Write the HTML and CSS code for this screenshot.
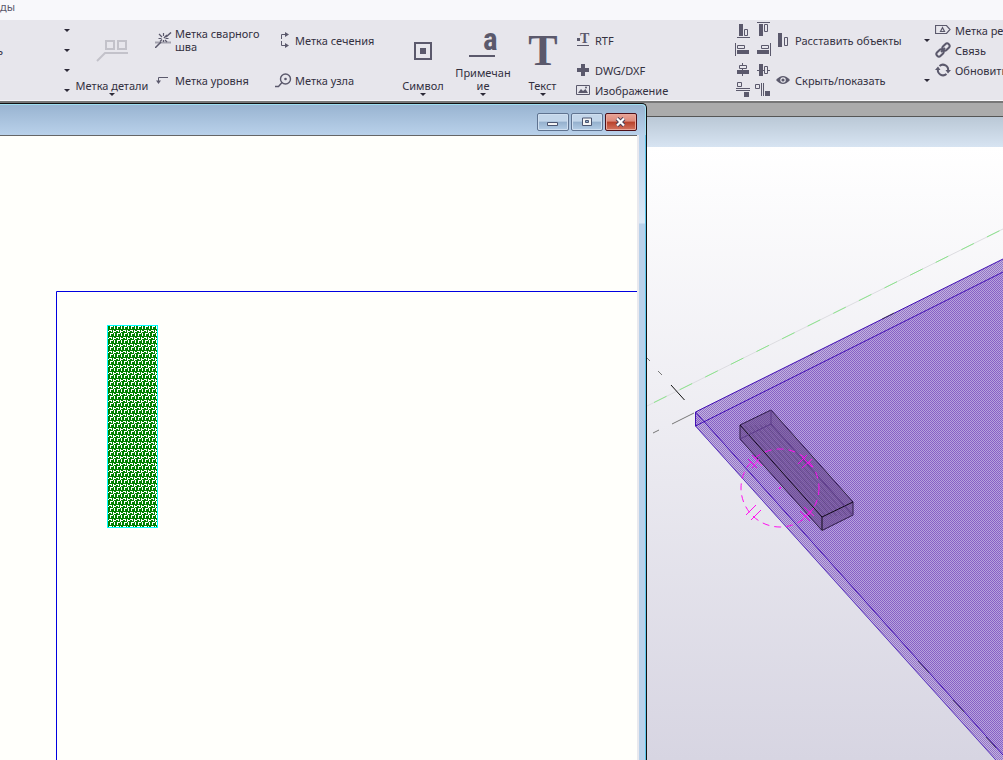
FILE: index.html
```html
<!DOCTYPE html>
<html lang="ru">
<head>
<meta charset="utf-8">
<title>Чертёж</title>
<link rel="stylesheet" href="styles.css">
</head>
<body>
<nav class="tabs"><a class="tab" href="#views">ды</a></nav>

<header class="ribbon">
  <div class="group group-edge">
    <button class="tool tool-menu" aria-label="Меню 1"><span></span><i class="caret"></i></button>
    <button class="tool tool-menu"><span>ь</span><i class="caret"></i></button>
    <button class="tool tool-menu" aria-label="Меню 3"><span></span><i class="caret"></i></button>
    <button class="tool tool-menu" aria-label="Меню 4"><span></span><i class="caret"></i></button>
  </div>

  <button class="big big-part">
    <span class="big-icon"><svg width="32" height="22" viewBox="0 0 32 22" fill="none" stroke="#c3c2ca" stroke-width="2"><path d="M10 1h8v8h-8zM22 1h8v8h-8zM1 21l8-8h23"/></svg></span>
    <span>Метка детали</span><i class="caret"></i>
  </button>

  <div class="group group-marks">
    <button class="tool tall">
      <svg class="icon" viewBox="0 0 18 16"><path d="M0 10.500h16" stroke="#a3a2ae" stroke-width="2"/><path d="M0 16l6-6M11 5l5-4.500M9 6l3-3" stroke="#5b596c" stroke-width="1.500"/><path d="M8.500 1v3M4 2l3 3M3.500 6.500h3M10.500 6.500h3M10 8l2 2M5 9.500l2-2M8.500 8v2" stroke="#5b596c" stroke-width="1.200"/></svg>
      <span>Метка сварного<br>шва</span>
    </button>
    <button class="tool tall">
      <svg class="icon" viewBox="0 0 18 16"><path d="M13 5.500H3.500V10" fill="none" stroke="#5b596c"/><path d="M1 8.500h5L3.500 12z" fill="#5b596c"/></svg>
      <span>Метка уровня</span>
    </button>
  </div>

  <div class="group group-sections">
    <button class="tool tall">
      <svg class="icon" viewBox="0 0 18 16"><path d="M6.500 7V2.500H10M6.500 9v4.500H10" fill="none" stroke="#5b596c"/><path d="M10 0l4 2.500L10 5zM10 11l4 2.500-4 2.500z" fill="#5b596c"/></svg>
      <span>Метка сечения</span>
    </button>
    <button class="tool tall">
      <svg class="icon" viewBox="0 0 18 16"><g fill="none" stroke="#5b596c" stroke-width="1.400"><circle cx="10.500" cy="7" r="5"/><path d="M7 10.500L3.500 14.500H0"/></g><circle cx="10.500" cy="7" r="1.300" fill="#5b596c"/></svg>
      <span>Метка узла</span>
    </button>
  </div>

  <button class="big big-symbol">
    <span class="big-icon"><svg width="18" height="18" viewBox="0 0 18 18"><path d="M1 1h16v16H1z" fill="none" stroke="#5b596c" stroke-width="2"/><path d="M6 6h6v6H6z" fill="#5b596c"/></svg></span>
    <span>Символ</span><i class="caret"></i>
  </button>
  <button class="big big-note">
    <span class="big-icon"><svg width="40" height="24" viewBox="0 0 40 24" fill="#5b596c"><text class="glyph-a" x="20" y="17">a</text><path d="M6 22h26v2H6z"/></svg></span>
    <span>Примечан<br>ие</span><i class="caret"></i>
  </button>
  <button class="big big-text">
    <span class="big-icon"><svg width="30" height="32" viewBox="0 0 30 32" fill="#5b596c"><text class="glyph-t" x="15" y="30" text-anchor="middle">T</text></svg></span>
    <span>Текст</span><i class="caret"></i>
  </button>

  <div class="group group-insert">
    <button class="tool tall">
      <svg class="icon" viewBox="0 0 18 16" fill="#5b596c"><text class="glyph-rtf" x="5" y="11">T</text><path d="M2 6h3v3H2zM2 13h12v1H2z"/></svg>
      <span>RTF</span>
    </button>
    <button class="tool">
      <svg class="icon" viewBox="0 0 18 16"><path d="M6 2h4v4h4v4h-4v4H6v-4H2V6h4z" fill="#5b596c"/></svg>
      <span>DWG/DXF</span>
    </button>
    <button class="tool">
      <svg class="icon" viewBox="0 0 18 16"><path d="M1.500 3.500h13v9h-13z" fill="none" stroke="#5b596c"/><path d="M3 11l3-4 2 2 2.500-2L13 11z" fill="#5b596c"/><circle cx="11" cy="5.500" r="1" fill="#5b596c"/></svg>
      <span>Изображение</span>
    </button>
  </div>

  <div class="align">
    <button aria-label="По нижнему краю"><svg viewBox="0 0 20 20"><path class="f" d="M6 4h4v12H6z"/><path class="s" d="M11.500 9.500h3v6h-3zM4 17.500h13"/></svg></button>
    <button aria-label="По верхнему краю"><svg viewBox="0 0 20 20"><path class="f" d="M6 4h4v12H6z"/><path class="s" d="M11.500 4.500h3v7h-3zM4 2.500h13"/></svg></button>
    <button aria-label="По левому краю"><svg viewBox="0 0 20 20"><path class="f" d="M4 10h12v4H4z"/><path class="s" d="M4.500 5.500h7v3h-7zM2.500 3v13"/></svg></button>
    <button aria-label="По правому краю"><svg viewBox="0 0 20 20"><path class="f" d="M4 10h12v4H4z"/><path class="s" d="M8.500 5.500h7v3h-7zM17.500 3v13"/></svg></button>
    <button aria-label="По центру"><svg viewBox="0 0 20 20"><path class="f" d="M4 10h12v4H4z"/><path class="s" d="M6.500 5.500h7v3h-7zM9.500 3v2M9.500 8v8"/></svg></button>
    <button aria-label="По середине"><svg viewBox="0 0 20 20"><path class="f" d="M6 4h4v12H6z"/><path class="s" d="M11.500 6.500h3v7h-3zM4 10.500h2M10 10.500h1M15 10.500h2"/></svg></button>
    <button aria-label="Интервал по вертикали"><svg viewBox="0 0 20 20"><path class="f" d="M11 12h5v5h-5z"/><path class="s" d="M4.500 2.500h4v4h-4zM3 8.500h14M3 10.500h14"/></svg></button>
    <button aria-label="Интервал по горизонтали"><svg viewBox="0 0 20 20"><path class="f" d="M12 11h5v5h-5z"/><path class="s" d="M2.500 4.500h4v4h-4zM8.500 3v13M10.500 3v13"/></svg></button>
  </div>

  <div class="group group-arrange">
    <button class="tool tool-menu tall">
      <svg class="icon" viewBox="0 0 18 16"><path d="M3 1h4v14H3z" fill="#5b596c"/><path d="M9.500 5.500h3v8h-3z" fill="none" stroke="#5b596c"/></svg>
      <span>Расставить объекты</span><i class="caret"></i>
    </button>
    <button class="tool tool-menu tall">
      <svg class="icon" viewBox="0 0 18 16"><path d="M1 8q7-8 14 0q-7 8-14 0z" fill="#5b596c"/><circle cx="8" cy="8" r="2.200" fill="none" stroke="#e7e6ec" stroke-width="1.200"/></svg>
      <span>Скрыть/показать</span><i class="caret"></i>
    </button>
  </div>

  <div class="group group-update">
    <button class="tool">
      <svg class="icon" viewBox="0 0 18 16"><path d="M.5 3.500h11l3.500 4-3.500 4H.5zM5.500 9.500l2-4 2 4z" fill="none" stroke="#5b596c" stroke-width="1.200"/></svg>
      <span>Метка ревизии</span>
    </button>
    <button class="tool">
      <svg class="icon" viewBox="0 0 18 16"><g fill="none" stroke="#5b596c" stroke-width="2"><rect x="7" y="2.500" width="8" height="5" rx="2.500" transform="rotate(-45 11 5)"/><rect x="1" y="8.500" width="8" height="5" rx="2.500" transform="rotate(-45 5 11)"/><path d="M6 10l4-4"/></g></svg>
      <span>Связь</span>
    </button>
    <button class="tool">
      <svg class="icon" viewBox="0 0 18 16"><g fill="none" stroke="#5b596c" stroke-width="2"><path d="M4.500 4A5.200 5.200 0 0 1 13 9"/><path d="M11.500 12A5.200 5.200 0 0 1 3 7"/></g><path d="M10.500 8h5.500l-3 3.500zM0 8h5.500L3 4.500z" fill="#5b596c"/></svg>
      <span>Обновить</span>
    </button>
  </div>
</header>

<main class="desk">
  <section class="win">
    <div class="titlebar">
      <button class="wbtn" aria-label="Свернуть"><svg width="14" height="10" viewBox="0 0 14 10"><path d="M1.500 5.500h10v3h-10z" fill="#f4f4f4" stroke="#4a5570"/></svg></button>
      <button class="wbtn" aria-label="Развернуть"><svg width="14" height="10" viewBox="0 0 14 10"><path d="M2.500 1h9v7.500h-9z" fill="#f4f4f4" stroke="#4a5570"/><path d="M5.500 3.500h3v2h-3z" fill="#8fabc8" stroke="#4a5570"/></svg></button>
      <button class="wbtn wbtn-close" aria-label="Закрыть"><svg width="14" height="10" viewBox="0 0 14 10"><path d="M3 1.500l7 7M10 1.500l-7 7" stroke="#4a4058" stroke-width="4"/><path d="M3 1.500l7 7M10 1.500l-7 7" stroke="#fff" stroke-width="2.200"/></svg></button>
    </div>
    <div class="frame">
      <svg class="sheet" aria-label="Чертёж">
        <defs>
          <pattern id="weave" width="7" height="7" patternUnits="userSpaceOnUse" x="109" y="190">
            <path d="M0 0h7v7H0z" fill="#008000"/>
            <path d="M1 0h3v1H1zM1 1h1v2H1zM5 0h1v3H5zM0 4h3v1H0zM2 5h1v1H2zM4 4h1v3H4zM5 5h2v1H5z" fill="#fff"/>
          </pattern>
        </defs>
        <path d="M56.500 3000V155.500H3000" fill="none" stroke="#0000e0"/>
        <rect x="108" y="190" width="49" height="201" fill="url(#weave)"/>
        <rect x="107.500" y="189.500" width="50" height="202" fill="none" stroke="#00ffff"/>
      </svg>
      <div class="rail"></div>
    </div>
  </section>

  <section class="model">
    <div class="model-title"></div>
    <svg class="scene" viewBox="647 147 356 613" preserveAspectRatio="xMinYMin slice" aria-label="3D вид">
      <defs>
        <pattern id="dots" width="2" height="2" patternUnits="userSpaceOnUse"><path d="M0 0h2v2H0z" fill="#b7a3dc"/><path d="M0 0h1v1H0zM1 1h1v1H1z" fill="#8760c6"/></pattern>
        <pattern id="edge" width="2" height="2" patternUnits="userSpaceOnUse"><path d="M0 0h2v2H0z" fill="#c1b2e0"/><path d="M0 0h1v1H0zM1 1h1v1H1z" fill="#9474c6"/></pattern>
        <pattern id="grain" width="4" height="4" patternUnits="userSpaceOnUse" patternTransform="rotate(-42)"><path d="M0 0h1v4H0z" fill="#432b65" fill-opacity=".3"/></pattern>
      </defs>
      <path d="M647 406L1003 229" stroke="#dcdce0"/>
      <path d="M654 402.500L1003 229" stroke="#8be58b" stroke-dasharray="14 14.600"/>
      <path d="M695 412L1003 259V768L695 426z" fill="url(#edge)"/>
      <path d="M695 426L1003 272V755L695 412z" fill="url(#dots)"/>
      <g fill="none" stroke="#4210b4">
        <path d="M695.500 426V412L1003 259"/><path d="M695.500 426L1003 272"/>
        <path d="M695.500 426L1003 768" stroke="#5a35bd"/><path d="M695.500 412L1003 755"/>
      </g>
      <path d="M810 355l4-2M882 319l12-6M918 661l11 12M953 700l11 12M986 737l10 11" stroke="#333" stroke-opacity=".7"/>
      <path d="M740 425L771 410L853 502V515L822 530.500L740 439z" fill="#5e4080" fill-opacity=".55"/>
      <path d="M771 424L853 515L822 517L740 426z" fill="url(#grain)"/>
      <g fill="none" stroke="#2c1a45">
        <path d="M740 425L771 410L853 502V515L822 530.500L740 439z"/>
        <path d="M740 425L822 517V530M822 517L853 502" stroke="#100818"/>
        <path d="M771 410V424L740 439M771 424L853 515" stroke="#5b3a88"/>
      </g>
      <g fill="none" stroke="#ff10f0">
        <circle cx="780" cy="488" r="39" stroke-dasharray="7 5"/>
        <path d="M748 459l9 9M752 455l10 11M798 464l9-9M802 468l10-9M746 515l10-10M751 520l10-10M804 507l10 9M800 511l10 10M752 468l7-9M802 457l10 10M803 518l11-10"/>
        <path d="M779 488h2" stroke-width="2"/>
      </g>
      <path d="M671 385l13.500 15" stroke="#111"/>
      <path d="M647 358l3 3M658 371l4 4M672 424l22-11M653 433l6-3" stroke="#777"/>
    </svg>
  </section>
</main>
</body>
</html>
```
FILE: styles.css
```css
* { box-sizing: border-box; }
body {
  margin: 0;
  height: 100vh;
  display: flex;
  flex-direction: column;
  overflow: hidden;
  font: 11px/13px "Noto Sans", "Open Sans", sans-serif;
  color: #33303f;
}
button {
  margin: 0;
  padding: 0;
  border: 0;
  background: none;
  color: inherit;
  font: inherit;
}
svg { display: block; flex: none; }

.tabs { height: 20px; flex: none; background: #f8f8fb; }
.tab { color: #5b596c; text-decoration: none; }

.ribbon {
  display: flex;
  flex: none;
  height: 81px;
  background: #e7e6ec;
  border-bottom: 1px solid #f8f8fb;
  overflow: hidden;
  white-space: nowrap;
}
.group {
  display: grid;
  grid-template-rows: repeat(4, 20px);
  flex: none;
}
.tool {
  display: flex;
  align-items: center;
  gap: 2px;
  text-align: left;
}
.tall { grid-row: span 2; }
.tool-menu .caret { margin-left: auto; }
.icon { width: 18px; height: 16px; }
.caret {
  flex: none;
  width: 0;
  border: 3px solid transparent;
  border-top: 3px solid #2c2937;
  border-bottom: 0;
}

.group-edge { width: 70px; margin-right: 4px; }
.group-edge span { margin-left: -3px; }
.group-marks { width: 120px; margin-left: 5px; }
.group-sections { width: 120px; }
.group-insert { width: 158px; margin-left: 5px; }
.group-arrange { width: 155px; margin-left: 2px; }
.group-update { margin-left: 5px; }

.big {
  display: flex;
  flex: none;
  flex-direction: column;
  align-items: center;
  gap: 1px;
  height: 80px;
  padding-bottom: 4px;
  text-align: center;
}
.big-icon {
  flex: 1;
  display: flex;
  align-items: center;
  padding-top: 4px;
}
.big-icon svg { overflow: visible; }
.big-part { width: 76px; }
.big-symbol { width: 56px; }
.big-note { width: 64px; }
.big-text { width: 55px; }
.glyph-a { font: bold 31px/1 "Roboto Condensed", "Liberation Sans Narrow", "Open Sans Condensed", sans-serif; }
.glyph-t { font: bold 44px/1 "Liberation Serif", serif; }
.glyph-rtf { font: bold 14px/1 "Liberation Serif", serif; }

.align {
  display: grid;
  flex: none;
  grid-template-columns: 20px 20px;
  grid-template-rows: repeat(4, 20px);
}
.align svg { width: 20px; height: 20px; }
.f { fill: #5b596c; }
.s { fill: none; stroke: #5b596c; }

.desk {
  flex: 1;
  min-height: 0;
  display: flex;
  background: #ababab;
  border-top: 2px solid #777;
}
.win {
  flex: 647 1 0;
  min-width: 0;
  display: flex;
  flex-direction: column;
  background: #b9d1ea;
  border: solid #111;
  border-width: 1px 1px 0 0;
  border-radius: 0 5px 0 0;
  box-shadow: inset -1px 1px 0 #9fe0f2;
}
.titlebar {
  display: flex;
  flex: none;
  justify-content: flex-end;
  gap: 2px;
  height: 30px;
  padding: 8px 8px 0 0;
  margin: 1px 1px 0 0;
  border-radius: 0 4px 0 0;
  background: linear-gradient(#99b4d1, #b9d1ea);
}
.wbtn {
  display: flex;
  align-items: center;
  justify-content: center;
  width: 32px;
  height: 18px;
  border: 1px solid #5f7390;
  border-radius: 2px;
  background: linear-gradient(#c3d6ea 45%, #94b0cd 50%, #b4cde6);
  box-shadow: inset 0 0 0 1px #cfdff0;
}
.wbtn-close {
  border-color: #4d0f18;
  background: linear-gradient(#e9a497, #dd8a7b 45%, #b8402a 50%, #d47460);
  box-shadow: inset 0 0 0 1px #e8a79b;
}
.frame { flex: 1; min-height: 0; display: flex; }
.sheet {
  flex: 1;
  min-width: 0;
  height: 100%;
  background: #fffffb;
  border-top: 1px solid #666;
}
.rail {
  flex: none;
  width: 9px;
  border-left: 2px solid #e9e9ee;
  border-right: 1px solid #5cc6ea;
  background: linear-gradient(#b9d1ea, #dbe8f6 88px, #b9d1ea 89px);
}

.model {
  flex: 356 1 0;
  min-width: 0;
  display: flex;
  flex-direction: column;
  margin-top: 13px;
  border-top: 1px solid #555;
}
.model-title {
  flex: none;
  height: 30px;
  background: linear-gradient(#bac8d6, #d7e4f2);
}
.scene {
  flex: 1;
  min-height: 0;
  width: 100%;
  background: linear-gradient(#fff, #d7d5e2);
}
```
